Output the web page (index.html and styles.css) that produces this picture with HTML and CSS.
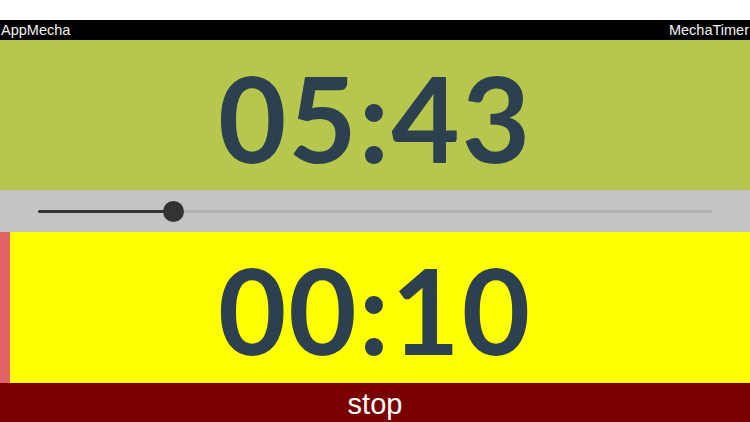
FILE: index.html
```html
<!DOCTYPE html>
<html lang="en">
  <head>
    <meta charset="utf-8">
    <title>MechaTimer</title>
    <link rel="stylesheet" href="styles.css">
  </head>
  <body>
    <div class="status"></div>
    <div class="titlebar">
      <span>AppMecha</span>
      <span>MechaTimer</span>
    </div>

    <div class="clock total">05:43</div>

    <div class="progress">
      <div class="track">
        <div class="done" style="width:20%"></div>
        <div class="thumb" style="left:20%"></div>
      </div>
    </div>

    <div class="lap">
      <div class="marker"></div>
      <div class="clock current">00:10</div>
    </div>

    <div class="stopBtn">stop</div>
  </body>
</html>
```

FILE: styles.css
```css
html,body{
	margin:0;
	padding:0;
	width:750px;
	height:422px;
	overflow:hidden;
	background:#fff;
	font-family:"Liberation Sans",Arial,sans-serif;
}
.status{
	height:20px;
	background:#fff;
}
.titlebar{
	height:20px;
	background:#000;
	color:#f2f2f2;
	font-size:14.5px;
	line-height:20px;
	display:flex;
	justify-content:space-between;
	padding:0 1px;
}
.clock{
	font-family:Lato,"Noto Sans",sans-serif;
	font-weight:700;
	color:#2d4050;
	font-size:118px;
	letter-spacing:2px;
	display:flex;
	align-items:center;
	justify-content:center;
	box-sizing:border-box;
	padding-top:4px;
}
.total{
	height:150px;
	background:#b7c74d;
}
.progress{
	height:42px;
	background:#c4c4c4;
	display:flex;
	align-items:center;
	padding:0 38px;
}
.track{
	position:relative;
	flex:1;
	height:3px;
	background:#b3b3b3;
}
.done{
	height:3px;
	background:#333;
	border-radius:2px;
}
.thumb{
	position:absolute;
	top:-9px;
	width:21px;
	height:21px;
	margin-left:-10px;
	border-radius:50%;
	background:#333;
}
.lap{
	height:151px;
	display:flex;
	background:#ff0;
}
.marker{
	width:10px;
	background:#e06464;
}
.current{
	flex:1;
	padding-right:10px;
}
.stopBtn{
	height:39px;
	background:#7a0000;
	color:#fff;
	font-size:29px;
	line-height:42px;
	text-align:center;
}
```
